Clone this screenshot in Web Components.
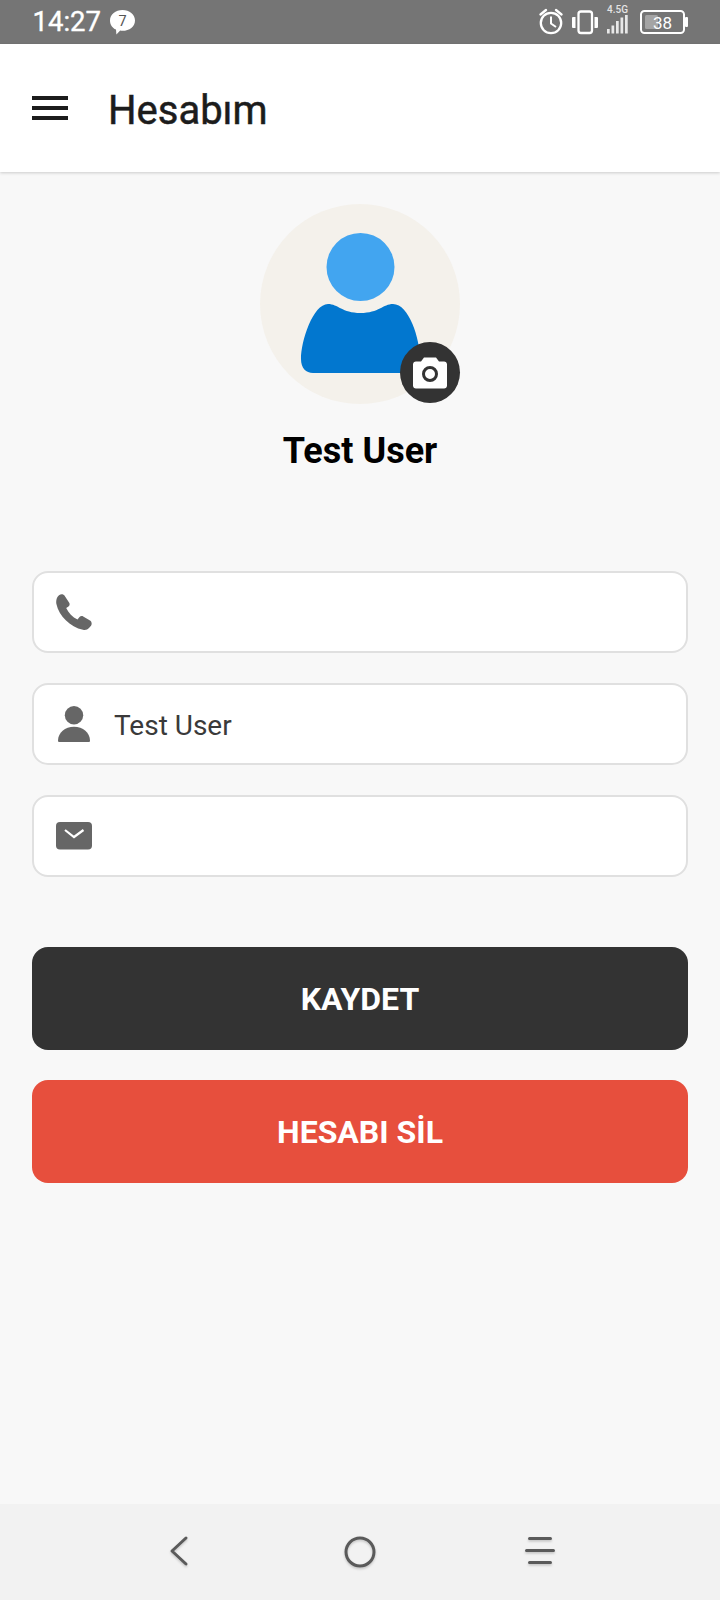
<!DOCTYPE html>
<html lang="tr"><head><meta charset="utf-8"><title>Hesabım</title>
<style>
html,body{margin:0;padding:0;height:1600px;width:720px;overflow:hidden;font-family:Roboto,"Liberation Sans",sans-serif}
app-shell{height:1600px}
</style></head><body>
<template id="t-shell"><style>
:host{display:flex;flex-direction:column;width:720px;background:#f8f8f8}
.main{flex:1;display:flex;flex-direction:column;padding:32px 32px 0;box-sizing:border-box}
.fields{display:flex;flex-direction:column;gap:30px;margin-top:100px}
.actions{display:flex;flex-direction:column;gap:30px;margin-top:70px}
</style>
<slot name="status"></slot><slot name="header"></slot>
<div class="main"><slot name="avatar"></slot>
<div class="fields"><slot name="fields"></slot></div>
<div class="actions"><slot name="actions"></slot></div></div>
<slot name="nav"></slot></template>

<template id="t-status"><style>
:host{display:flex;align-items:center;height:44px;background:#757575;color:#fff;padding-left:32.500px;box-sizing:border-box;flex:none}
.time{font-size:27.500px;font-weight:400;-webkit-text-stroke:.35px #fff;line-height:44px}
svg{display:block;flex:none}
.bubble{margin-left:8px}
.right{margin-left:auto;display:flex;align-items:flex-start;height:44px;margin-right:32px}
text{font-family:Roboto,sans-serif}
</style>
<span class="time">14:27</span>
<svg class="bubble" width="27" height="27" viewBox="0 0 27 27"><path d="M13.500 1C20.400 1 26 5.400 26 11.400S20.400 21.800 13.500 21.800c-.9 0-1.500 0-2.300-.2L7.400 25.600 7 20.600C3.200 18.800 1 15.500 1 11.400 1 5.400 6.600 1 13.500 1Z" fill="#fff"/><text x="13.500" y="17" font-size="14.500" text-anchor="middle" fill="#555">7</text></svg>
<div class="right"><svg width="149" height="44" viewBox="539 0 149 44">
<g fill="none" stroke="#fff" stroke-width="2.300"><circle cx="551" cy="23" r="10.200"/><path d="M551 16.500V23.500L556 27" stroke-width="2"/><path d="M540.500 14.500L546 10M561.500 14.500L556 10" stroke-linecap="round"/></g>
<rect x="578.500" y="11.500" width="13.500" height="21.500" rx="2.500" fill="none" stroke="#fff" stroke-width="2.300"/>
<path d="M572 18a1 1 0 0 1 1-1h2.500v11H573a1 1 0 0 1-1-1zM594.500 17H597a1 1 0 0 1 1 1v9a1 1 0 0 1-1 1h-2.500z" fill="#fff"/>
<path d="M607 29h2.700v4.500H607zM611.500 25.500h2.700v8h-2.700zM616 21h2.700v12.500H616zM620.500 17.500h2.700v16h-2.700zM625 15h2.700v18.500H625z" fill="#e8e8e8"/>
<text x="617.500" y="12.800" font-size="10" font-weight="500" text-anchor="middle" fill="#e4e4e4">4.5G</text>
<rect x="641" y="11" width="43" height="22" rx="3.500" fill="none" stroke="#fff" stroke-width="2"/>
<rect x="645" y="15" width="13" height="14" rx="1.500" fill="#a4a4a4"/>
<rect x="685" y="17" width="3" height="10" rx="1" fill="#fff"/>
<text x="662.500" y="28.500" font-size="17" text-anchor="middle" fill="#fff">38</text>
</svg></div></template>

<template id="t-header"><style>
:host{display:flex;align-items:center;height:128px;background:#fff;box-shadow:0 1px 3px rgba(0,0,0,.18);padding-left:32px;box-sizing:border-box;flex:none;position:relative}
.menu{width:36px;display:flex;flex-direction:column;gap:6px;margin-top:-1px}
.menu i{display:block;height:4px;background:#1c1c1c}
h1{margin:6px 0 0 40px;font:400 40px/48px Roboto,sans-serif;color:#1c1c1c;-webkit-text-stroke:.5px #1c1c1c}
</style><div class="menu"><i></i><i></i><i></i></div><h1><slot></slot></h1></template>

<template id="t-avatar"><style>
:host{display:flex;flex-direction:column;align-items:center}
.wrap{position:relative;width:200px;height:200px}
.circle{display:block}
.badge{position:absolute;right:0;bottom:1px;width:60px;height:61px;border-radius:50%;background:#333;display:flex;align-items:center;justify-content:center}
.name{margin-top:27px;font:700 36px/40px Roboto,sans-serif;color:#000}
</style><div class="wrap">
<svg class="circle" width="200" height="200" viewBox="0 0 200 200"><circle cx="100" cy="100" r="100" fill="#f4f1eb"/><circle cx="100.500" cy="63" r="34" fill="#42a5f0"/><path d="M41 155C41 137 53 100 68 100 78 100 82 109 100.500 109 119 109 123 100 133 100 149 100 160 135 160 155 160 164 155 169 148 169H53C46 169 41 164 41 155Z" fill="#0277cf"/></svg>
<div class="badge"><svg width="34" height="32" viewBox="0 0 34 32"><path d="M11 .5H23L26 4.500H31C32.700 4.500 34 5.800 34 7.500V28.500C34 30.200 32.700 31.500 31 31.500H3C1.300 31.500 0 30.200 0 28.500V7.500C0 5.800 1.300 4.500 3 4.500H8Z" fill="#fff"/><circle cx="17" cy="17" r="6.500" fill="#fff" stroke="#333" stroke-width="3"/></svg></div>
</div><div class="name"><slot></slot></div></template>

<template id="t-field"><style>
:host{display:flex;align-items:center;height:82px;box-sizing:border-box;background:#fff;border:2px solid #e0e0e0;border-radius:16px;padding-left:22px;gap:22px}
.ic{width:36px;height:36px;display:flex;align-items:center;justify-content:center;flex:none}
.v{font:400 28px/36px Roboto,sans-serif;color:#3a3a3a;margin-top:3px}
</style><div class="ic"><slot name="icon"></slot></div><div class="v"><slot></slot></div></template>

<template id="t-btn"><style>
:host{display:flex;align-items:center;justify-content:center;height:103px;border-radius:16px;background:var(--bg,#333);color:#fff;font:700 32px/40px Roboto,sans-serif}
</style><slot></slot></template>

<template id="t-nav"><style>
:host{display:block;height:96px;background:#f2f2f2;flex:none}
svg{display:block}
</style><svg width="720" height="96" viewBox="0 1504 720 96">
<defs><filter id="s" x="-20%" y="-20%" width="140%" height="150%"><feDropShadow dx="0" dy="1.500" stdDeviation="1" flood-color="#000" flood-opacity=".2"/></filter></defs>
<g fill="none" stroke="#5a5a5a" stroke-width="3" stroke-linecap="round" stroke-linejoin="round" filter="url(#s)">
<path d="M186 1538L172 1551 186 1564"/><circle cx="360" cy="1552" r="14"/><path d="M529.500 1538.500H550.500M526.500 1550.500H553.500M529.500 1562.500H550.500"/></g></svg></template>

<app-shell>
<status-bar slot="status"></status-bar>
<app-header slot="header">Hesabım</app-header>
<profile-avatar slot="avatar">Test User</profile-avatar>
<form-field slot="fields"><svg slot="icon" width="36" height="36" viewBox="0 0 36 36" style="display:block"><path d="M3 1.200C5-.3 7.500 0 8.600 1.700L13.200 8.800C14 10 13.700 11.600 12.500 12.400L10.200 14C12.500 19 16.500 23 21.500 25.600L23.500 23C24.400 22 26 21.700 27.200 22.400L34 26.600C35.700 27.700 36.200 30 35 31.700L33 34C31.500 35.700 29.500 36.300 27 35.800 14 33 3 22 .4 10-.3 6.500.8 3 3 1.200Z" fill="#666"/></svg></form-field>
<form-field slot="fields"><svg slot="icon" width="36" height="36" viewBox="0 0 36 36" style="display:block"><circle cx="18" cy="9.200" r="9.200" fill="#666"/><path d="M2 34.500C2 27 9 20.800 18 20.800S34 27 34 34.500C34 35.500 33.500 36 32.500 36H3.500C2.500 36 2 35.500 2 34.500Z" fill="#666"/></svg>Test User</form-field>
<form-field slot="fields"><svg slot="icon" width="36" height="28" viewBox="0 0 36 28" style="display:block"><rect width="36" height="27.500" rx="4" fill="#666"/><path d="M9 8L18 15 27.500 8" fill="none" stroke="#fff" stroke-width="2.200"/></svg></form-field>
<action-button slot="actions">KAYDET</action-button>
<action-button slot="actions" style="--bg:#e74f3d">HESABI SİL</action-button>
<nav-bar slot="nav"></nav-bar>
</app-shell>
<script>
for (const [tag,id] of [['app-shell','t-shell'],['status-bar','t-status'],['app-header','t-header'],['profile-avatar','t-avatar'],['form-field','t-field'],['action-button','t-btn'],['nav-bar','t-nav']]) {
  customElements.define(tag, class extends HTMLElement {
    constructor(){super();this.attachShadow({mode:'open'}).appendChild(document.getElementById(id).content.cloneNode(true));}
  });
}
</script>
</body></html>
